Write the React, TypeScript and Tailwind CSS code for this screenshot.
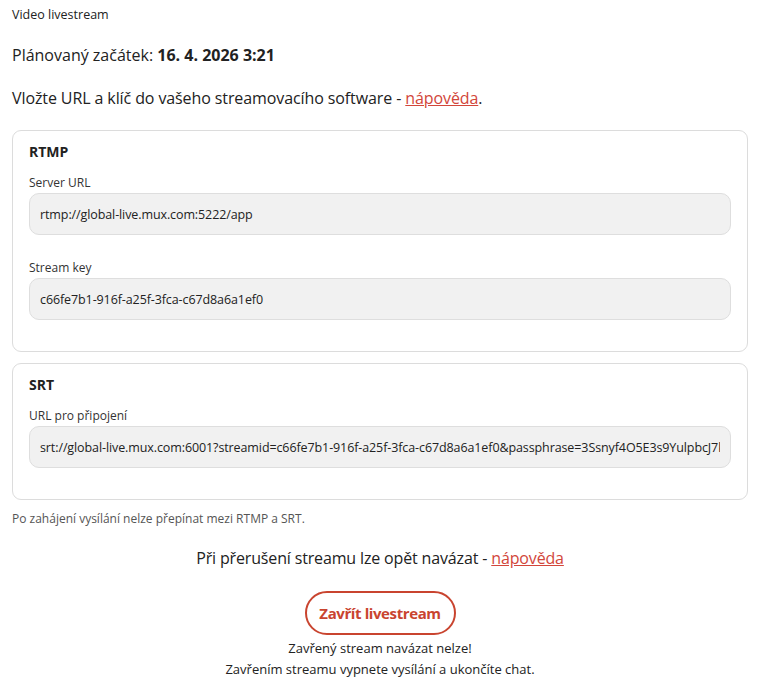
const font = "font-['Open_Sans',sans-serif]";

function Field({ label, value }: { label: string; value: string }) {
  return (
    <div>
      <label className="block text-[12px] text-[#333] mb-[2px] leading-[16px]">{label}</label>
      <input
        readOnly
        value={value}
        className="w-full h-[42px] rounded-[10px] border border-[#dedede] bg-[#f1f1f1] px-[10px] text-[12.5px] tracking-[-0.1px] text-[#222] outline-none"
      />
    </div>
  );
}

function Card({ title, children }: { title: string; children: React.ReactNode }) {
  return (
    <div className="rounded-[9px] border border-[#dcdcdc] px-[16px] pt-[11px] pb-[31px]">
      <h3 className="text-[14px] font-bold text-[#222] leading-[20px] mb-[13px]">{title}</h3>
      <div className="flex flex-col gap-[25px]">{children}</div>
    </div>
  );
}

export default function App() {
  return (
    <div className={`${font} pl-[12px] pr-[32px] pt-[6px] text-[#222] bg-white min-h-[692px]`}>
      <div className="text-[12.5px] leading-[18px]">Video livestream</div>

      <p className="mt-[20px] text-[16px] leading-[22px]">
        Plánovaný začátek: <b>16. 4. 2026 3:21</b>
      </p>

      <p className="mt-[21px] text-[16px] leading-[22px] tracking-[-0.1px]">
        Vložte URL a klíč do vašeho streamovacího software -{" "}
        <a href="#" className="text-[#d2463a] underline">nápověda</a>.
      </p>

      <div className="mt-[21px] flex flex-col gap-[11px]">
        <Card title="RTMP">
          <Field label="Server URL" value="rtmp://global-live.mux.com:5222/app" />
          <Field label="Stream key" value="c66fe7b1-916f-a25f-3fca-c67d8a6a1ef0" />
        </Card>
        <Card title="SRT">
          <Field
            label="URL pro připojení"
            value="srt://global-live.mux.com:6001?streamid=c66fe7b1-916f-a25f-3fca-c67d8a6a1ef0&passphrase=3Ssnyf4O5E3s9YulpbcJ7kQ2xW"
          />
        </Card>
      </div>

      <p className="mt-[11px] text-[12px] leading-[16px] text-[#555]">
        Po zahájení vysílání nelze přepínat mezi RTMP a SRT.
      </p>

      <p className="mt-[20px] text-center text-[16px] leading-[22px] tracking-[-0.15px]">
        Při přerušení streamu lze opět navázat -{" "}
        <a href="#" className="text-[#d2463a] underline">nápověda</a>
      </p>

      <div className="mt-[22px] flex flex-col items-center">
        <button className="h-[44px] w-[151px] rounded-full border-2 border-[#c9442f] text-[#c9442f] text-[15px] tracking-[-0.4px] font-bold">
          Zavřít livestream
        </button>
        <p className="mt-[3px] text-[13px] leading-[20px]">Zavřený stream navázat nelze!</p>
        <p className="mt-[1px] text-[13px] leading-[20px]">Zavřením streamu vypnete vysílání a ukončíte chat.</p>
      </div>
    </div>
  );
}
